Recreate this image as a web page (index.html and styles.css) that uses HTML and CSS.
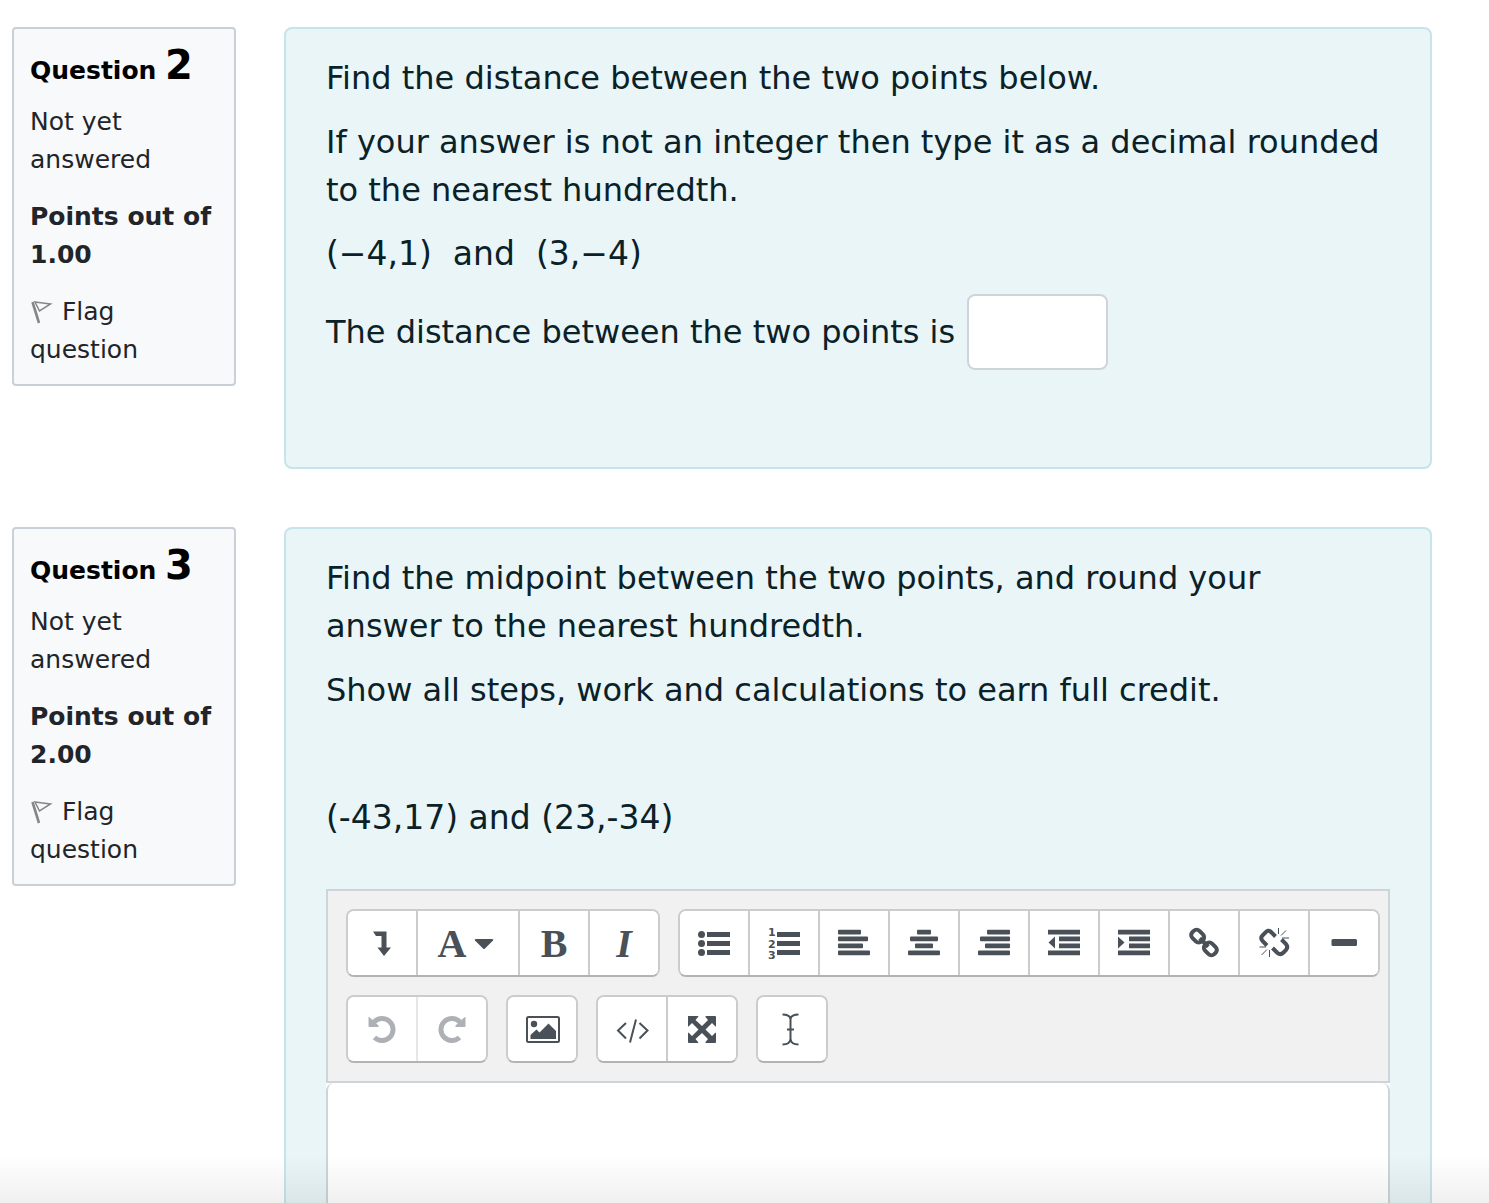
FILE: index.html
```html
<!DOCTYPE html>
<html lang="en">
<head>
<meta charset="utf-8">
<title>Quiz</title>
<link rel="stylesheet" href="styles.css">
</head>
<body>
<main class="quiz">
  <section class="question">
    <aside class="info">
      <h3 class="info-title">Question <span class="number">2</span></h3>
      <p class="state">Not yet answered</p>
      <p class="grade">Points out of 1.00</p>
      <a class="flag" href="#"><svg class="flag-icon" width="24" height="24" viewBox="0 0 24 24" fill="none" stroke="#868686"><path d="M2.5 2L9 23" stroke-width="2.6"/><path d="M5 2L20.500 4L9.500 11Z" stroke-width="1.500"/></svg> Flag question</a>
    </aside>
    <div class="content">
      <p>Find the distance between the two points below.</p>
      <p>If your answer is not an integer then type it as a decimal rounded to the nearest hundredth.</p>
      <p class="points">(−4,1)&nbsp; and&nbsp; (3,−4)</p>
      <p class="answer-row"><label for="q2">The distance between the two points is</label><input class="answer" id="q2" type="text"></p>
    </div>
  </section>

  <section class="question">
    <aside class="info">
      <h3 class="info-title">Question <span class="number">3</span></h3>
      <p class="state">Not yet answered</p>
      <p class="grade">Points out of 2.00</p>
      <a class="flag" href="#"><svg class="flag-icon" width="24" height="24" viewBox="0 0 24 24" fill="none" stroke="#868686"><path d="M2.5 2L9 23" stroke-width="2.6"/><path d="M5 2L20.500 4L9.500 11Z" stroke-width="1.500"/></svg> Flag question</a>
    </aside>
    <div class="content">
      <p>Find the midpoint between the two points, and round your<br>answer to the nearest hundredth.</p>
      <p>Show all steps, work and calculations to earn full credit.</p>
      <p>&nbsp;</p>
      <p class="points">(-43,17) and (23,-34)</p>
      <div class="editor">
        <div class="toolbar" role="toolbar" aria-label="Editor">
          <div class="group">
            <button type="button" aria-label="Show more buttons"><svg width="36" height="36" viewBox="0 0 36 36"><path d="M9 6.500H22.500V22.500H27L20 31L13.500 22.500H17.500V11H12Z"/></svg></button>
            <button type="button" class="wide" aria-label="Paragraph styles"><span class="glyph">A</span><svg width="20" height="36" viewBox="0 0 20 36"><path d="M2 14H18Q20 14 19 15.500L11 23.500Q10 24.500 9 23.500L1 15.500Q0 14 2 14Z"/></svg></button>
            <button type="button" aria-label="Bold"><span class="glyph">B</span></button>
            <button type="button" aria-label="Italic"><span class="glyph italic">I</span></button>
          </div>
          <div class="group">
            <button type="button" aria-label="Unordered list"><svg width="36" height="36" viewBox="0 0 36 36"><circle cx="5.500" cy="9.500" r="3.500"/><circle cx="5.500" cy="18.500" r="3.500"/><circle cx="5.500" cy="27.500" r="3.500"/><path d="M11 7h23v5H11zM11 16h23v5H11zM11 25h23v5H11z"/></svg></button>
            <button type="button" aria-label="Ordered list"><svg width="36" height="36" viewBox="0 0 36 36"><text class="digit"><tspan x="2" y="11">1</tspan><tspan x="2" y="23">2</tspan><tspan x="2" y="34">3</tspan></text><path d="M11 7h23v5H11zM11 16h23v5H11zM11 25h23v5H11z"/></svg></button>
            <button type="button" aria-label="Left align"><svg width="36" height="36" viewBox="0 0 36 36"><rect x="2" y="4.700" width="23" height="4.800" rx="1"/><rect x="2" y="11.500" width="30" height="4.800" rx="1"/><rect x="2" y="18.500" width="25" height="4.800" rx="1"/><rect x="2" y="25.400" width="32" height="4.800" rx="1"/></svg></button>
            <button type="button" aria-label="Center"><svg width="36" height="36" viewBox="0 0 36 36"><rect x="11" y="4.700" width="14" height="4.800" rx="1"/><rect x="4" y="11.500" width="28" height="4.800" rx="1"/><rect x="9" y="18.500" width="18" height="4.800" rx="1"/><rect x="2" y="25.400" width="32" height="4.800" rx="1"/></svg></button>
            <button type="button" aria-label="Right align"><svg width="36" height="36" viewBox="0 0 36 36"><rect x="11" y="4.700" width="23" height="4.800" rx="1"/><rect x="4" y="11.500" width="30" height="4.800" rx="1"/><rect x="9" y="18.500" width="25" height="4.800" rx="1"/><rect x="2" y="25.400" width="32" height="4.800" rx="1"/></svg></button>
            <button type="button" aria-label="Outdent"><svg width="36" height="36" viewBox="0 0 36 36"><path d="M2 4.700h32v4.800H2zM13 11.500h21v4.800H13zM13 18.500h21v4.800H13zM2 25.400h32v4.800H2zM9 11.500v12L2.500 17.500z"/></svg></button>
            <button type="button" aria-label="Indent"><svg width="36" height="36" viewBox="0 0 36 36"><path d="M2 4.700h32v4.800H2zM13 11.500h21v4.800H13zM13 18.500h21v4.800H13zM2 25.400h32v4.800H2zM2 11.500v12L8.500 17.500z"/></svg></button>
            <button type="button" aria-label="Link"><svg class="line thick" width="36" height="36" viewBox="0 0 36 36"><g transform="rotate(45 18 17.500)"><rect x="2.500" y="12.500" width="13" height="10" rx="4"/><rect x="20.500" y="12.500" width="13" height="10" rx="4"/><path d="M12 17.500H24"/></g></svg></button>
            <button type="button" aria-label="Unlink"><svg class="line thick" width="36" height="36" viewBox="0 0 36 36"><path d="M11 20.500L6.500 16Q4 13 6.500 10.500L9 8Q12 4 15 7L19.500 11.500"/><path d="M25.500 14.500L30 19Q32.500 22 30 25L27.500 27.500Q24.500 30.500 21.500 28L16.500 23"/><path class="hair" d="M22.500 3v6M30 5.500L25 10.500M26 13h7M13.500 25v7M11 24.500L5.500 30M3.500 22h6.500"/></svg></button>
            <button type="button" aria-label="Horizontal rule"><svg width="36" height="36" viewBox="0 0 36 36"><rect x="5.500" y="14" width="25.500" height="7" rx="1.500"/></svg></button>
          </div>
          <div class="group">
            <button type="button" disabled aria-label="Undo"><svg width="36" height="36" viewBox="0 0 36 36"><path class="arc" d="M10 11A11 11 0 1 1 10.500 26.500"/><path d="M4.500 6.500Q4.500 5.500 5.500 6.200L14.500 14.500Q15 16 14 16H5.500Q4.500 16 4.500 15Z"/></svg></button>
            <button type="button" disabled aria-label="Redo"><svg width="36" height="36" viewBox="0 0 36 36"><path class="arc" d="M26 11A11 11 0 1 0 25.500 26.500"/><path d="M31.500 6.500Q31.500 5.500 30.500 6.200L21.500 14.500Q21 16 22 16H30.500Q31.500 16 31.500 15Z"/></svg></button>
          </div>
          <div class="group">
            <button type="button" aria-label="Image"><svg width="36" height="36" viewBox="0 0 36 36"><rect class="frame" x="3" y="6" width="32" height="25" rx="1.500"/><circle cx="10" cy="13" r="3.200"/><path d="M6.500 28V24L12.500 18.500L15.500 21.500L24.500 12.500L32 20V28Z"/></svg></button>
          </div>
          <div class="group">
            <button type="button" aria-label="HTML"><svg class="line" width="36" height="36" viewBox="0 0 36 36"><path d="M12 12L4 19.500L12 27.500M22 8.500L16 31.500M25.500 12L33.500 19.500L25.500 27.500"/></svg></button>
            <button type="button" aria-label="Full screen"><svg width="36" height="36" viewBox="0 0 36 36"><path d="M4 5H14Q15 5 14 6L11.500 9L18 15L24 9L21.500 6Q21 5 22 5H31Q32 5 32 6V15Q32 16 31 15L28 12L21.500 18.500L28 25L31 22Q32 21 32 22V31Q32 32 31 32H22Q21 32 21.500 31L24 28L18 22L11.500 28L14 31Q15 32 14 32H5Q4 32 4 31V22Q4 21 5 22L8 25L14.500 18.500L8 12L5 15Q4 16 4 15Z"/></svg></button>
          </div>
          <div class="group">
            <button type="button" aria-label="Screenreader helper"><svg class="line" width="36" height="36" viewBox="0 0 36 36"><path d="M8.500 3.500Q16 3.500 16.500 8V28Q16 33.500 8.500 33.500M24.500 3.500Q17 3.500 16.500 8M24.500 33.500Q17 33.500 16.500 28M13 18.500H20"/></svg></button>
          </div>
        </div>
        <textarea class="essay" aria-label="Answer text"></textarea>
      </div>
    </div>
  </section>
</main>
<div class="fade"></div>
</body>
</html>
```
FILE: styles.css
```css
* {
  box-sizing: border-box;
}

body {
  margin: 0;
  height: 100vh;
  overflow: hidden;
  background: #fff;
  color: #212529;
  font-family: Verdana, "DejaVu Sans", sans-serif;
}

.quiz {
  display: flex;
  flex-direction: column;
  gap: 58px;
  padding: 27px 57px 0 12px;
}

.question {
  display: grid;
  grid-template-columns: 224px minmax(0, 1fr);
  column-gap: 48px;
  align-items: start;
}

.info {
  padding: 14px 16px 15px;
  border: 2px solid #cad0d7;
  border-radius: 4px;
  background: #f8f9fb;
  font-size: 25px;
  line-height: 38px;
}

.info-title {
  margin: 0 0 10px;
  color: #000;
  font-size: 25px;
  line-height: 45px;
}

.number {
  font-size: 40px;
}

.info p {
  margin: 0 0 19px;
}

.info .grade {
  font-weight: bold;
}

.flag {
  display: block;
  color: inherit;
  text-decoration: none;
}

.flag-icon {
  vertical-align: -4px;
}

.content {
  min-height: 442px;
  padding: 25px 40px;
  border: 2px solid #c7e4ec;
  border-radius: 8px;
  background: #e9f5f7;
  color: #0b2128;
  font-size: 32px;
  line-height: 48px;
}

.content p {
  margin: 0 0 16px;
}

.content .points {
  font-size: 33px;
}

.content .answer-row {
  display: flex;
  align-items: center;
  gap: 12px;
}

.answer {
  width: 141px;
  height: 76px;
  padding: 12px;
  border: 2px solid #ced4da;
  border-radius: 8px;
  background: #fff;
  font: inherit;
}

.editor {
  margin-top: 47px;
  background: #fff;
}

.toolbar {
  display: flex;
  flex-wrap: wrap;
  gap: 18px;
  padding: 18px 8px 18px 18px;
  border: 2px solid #ced4da;
  background: #f1f1f1;
}

.group {
  display: flex;
  height: 68px;
  border: 2px solid #ccc;
  border-bottom-color: #b3b3b3;
  border-radius: 8px;
  background: #fff;
  overflow: hidden;
}

.group button {
  display: flex;
  align-items: center;
  justify-content: center;
  gap: 8px;
  width: 70px;
  padding: 0;
  border: 0;
  border-right: 2px solid #ccc;
  background: #fff;
  color: #495057;
}

.group button:last-child {
  width: 68px;
  border-right: 0;
}

.group button.wide {
  width: 102px;
  padding-right: 4px;
}

.group button:disabled {
  border-color: #e6e6e6;
  color: #adb1b5;
}

.group svg {
  fill: currentColor;
}

.group svg.line {
  fill: none;
  stroke: currentColor;
  stroke-width: 2;
}

.group svg.thick {
  stroke-width: 4;
}

.line .hair {
  stroke-width: 1;
}

.arc,
.frame {
  fill: none;
  stroke: currentColor;
  stroke-width: 5;
}

.frame {
  stroke-width: 2;
}

.digit {
  font: bold 11px "DejaVu Sans", sans-serif;
}

.glyph {
  font: bold 40px "Liberation Serif", serif;
}

.italic {
  font-style: italic;
}

.essay {
  display: block;
  width: 100%;
  height: 400px;
  padding: 12px;
  border: 2px solid #ced4da;
  border-top: 0;
  border-radius: 8px;
  background: #fff;
  font: inherit;
  resize: none;
}

.fade {
  position: fixed;
  inset: auto 0 0;
  height: 48px;
  background: linear-gradient(rgba(0, 0, 0, 0), rgba(0, 0, 0, 0.06));
  pointer-events: none;
}
```
